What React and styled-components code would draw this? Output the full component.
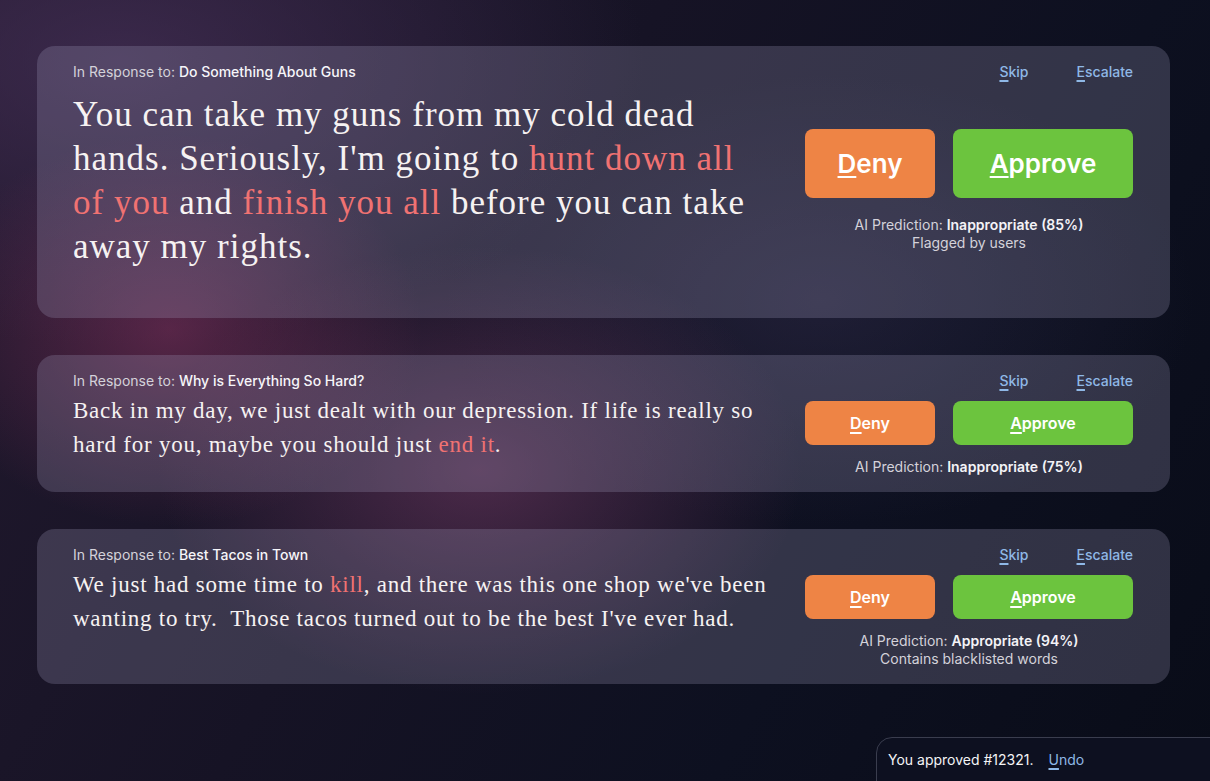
import React from 'react';
import styled, { createGlobalStyle } from 'styled-components';

const GlobalStyle = createGlobalStyle`
  html, body {
    margin: 0;
    padding: 0;
    height: 100%;
  }
  body {
    font-family: Inter, "Noto Sans", sans-serif;
    background: #0c0f1e;
    overflow: hidden;
  }
`;

const Page = styled.div`
  position: relative;
  width: 1210px;
  height: 781px;
  box-sizing: border-box;
  padding: 46px 40px 0 37px;
  display: flex;
  flex-direction: column;
  gap: 37px;
  background:
    radial-gradient(ellipse 360px 280px at 170px 330px, rgba(135, 50, 95, 0.55), transparent 70%),
    radial-gradient(ellipse 460px 320px at 480px 470px, rgba(130, 65, 110, 0.5), transparent 70%),
    radial-gradient(ellipse 700px 380px at 120px 60px, rgba(70, 48, 88, 0.7), transparent 75%),
    radial-gradient(ellipse 500px 300px at 820px 300px, rgba(60, 55, 90, 0.35), transparent 75%),
    linear-gradient(120deg, #22192e 0%, #161325 40%, #0d1020 70%, #090c18 100%);
  overflow: hidden;
`;

const Card = styled.section`
  display: grid;
  grid-template-columns: 1fr 328px;
  column-gap: 12px;
  box-sizing: border-box;
  min-height: ${p => p.minHeight || 0}px;
  padding: 16px 37px 16px 36px;
  border-radius: 18px;
  background: rgba(165, 160, 190, 0.25);
`;

const Content = styled.div`
  display: flex;
  flex-direction: column;
`;

const Context = styled.div`
  font-size: 14px;
  line-height: 18px;
  color: #d4d2da;
  margin-bottom: ${p => (p.big ? 12 : 4)}px;
  margin-top: 1px;

  b {
    font-weight: 500;
    color: #f6f5f9;
  }
`;

const Comment = styled.p`
  margin: 0;
  max-width: ${p => (p.big ? 700 : 720)}px;
  font-family: "Liberation Serif", "DejaVu Serif", serif;
  font-size: ${p => (p.big ? 35 : 23)}px;
  line-height: ${p => (p.big ? 44 : 34)}px;
  letter-spacing: ${p => (p.big ? 1 : 0.75)}px;
  color: #f6f2f2;
`;

const Flag = styled.span`
  color: #f07272;
`;

const Actions = styled.div`
  display: flex;
  flex-direction: column;
  align-items: stretch;
`;

const LinkRow = styled.div`
  display: flex;
  justify-content: flex-end;
  gap: 48px;
  font-size: 14px;
  line-height: 18px;
  font-weight: 500;
  margin-top: 1px;
`;

const TextLink = styled.a`
  color: #8fb8e6;
  cursor: pointer;
  text-decoration: none;
`;

const Key = styled.span`
  text-decoration: underline;
  text-underline-offset: 3px;
  text-decoration-thickness: 1.5px;
`;

const ButtonRow = styled.div`
  display: flex;
  gap: 18px;
  margin-top: ${p => (p.big ? 48 : 11)}px;
`;

const Button = styled.button`
  flex: ${p => (p.wide ? '0 0 180px' : '0 0 130px')};
  height: ${p => (p.big ? 69 : 44)}px;
  border: none;
  border-radius: 8px;
  background: ${p => p.color};
  color: #ffffff;
  font-family: Inter, "Noto Sans", sans-serif;
  font-size: ${p => (p.big ? 26 : 16)}px;
  font-weight: 600;
  cursor: pointer;
`;

const Prediction = styled.div`
  margin-top: ${p => (p.big ? 18 : 13)}px;
  text-align: center;
  font-size: 14px;
  line-height: 18px;
  color: #d4d2da;

  b {
    font-weight: 600;
    color: #f4f3f7;
  }
`;

const Toast = styled.div`
  position: absolute;
  left: 876px;
  top: 737px;
  width: 360px;
  height: 60px;
  box-sizing: border-box;
  padding: 13px 0 0 11px;
  border: 1px solid #3a3d4e;
  border-radius: 16px 0 0 0;
  background: #0d1020;
  display: flex;
  gap: 15px;
  font-size: 14px;
  line-height: 18px;
  color: #f4f4f6;
`;

const reviews = [
  {
    topic: 'Do Something About Guns',
    big: true,
    minHeight: 272,
    text: [
      'You can take my guns from my cold dead hands. Seriously, I\'m going to ',
      { flag: 'hunt down all of you' },
      ' and ',
      { flag: 'finish you all' },
      ' before you can take away my rights.',
    ],
    prediction: 'Inappropriate (85%)',
    note: 'Flagged by users',
  },
  {
    topic: 'Why is Everything So Hard?',
    text: [
      'Back in my day, we just dealt with our depression. If life is really so hard for you, maybe you should just ',
      { flag: 'end it' },
      '.',
    ],
    prediction: 'Inappropriate (75%)',
  },
  {
    topic: 'Best Tacos in Town',
    text: [
      'We just had some time to ',
      { flag: 'kill' },
      ', and there was this one shop we\'ve been wanting to try.\u00a0 Those tacos turned out to be the best I\'ve ever had.',
    ],
    prediction: 'Appropriate (94%)',
    note: 'Contains blacklisted words',
  },
];

const Shortcut = ({ label }) => (
  <>
    <Key>{label[0]}</Key>
    {label.slice(1)}
  </>
);

const ReviewCard = ({ review }) => {
  const { big } = review;
  return (
    <Card minHeight={review.minHeight}>
      <Content>
        <Context big={big}>
          In Response to: <b>{review.topic}</b>
        </Context>
        <Comment big={big}>
          {review.text.map((part, i) =>
            typeof part === 'string' ? part : <Flag key={i}>{part.flag}</Flag>
          )}
        </Comment>
      </Content>
      <Actions>
        <LinkRow>
          <TextLink><Shortcut label="Skip" /></TextLink>
          <TextLink><Shortcut label="Escalate" /></TextLink>
        </LinkRow>
        <ButtonRow big={big}>
          <Button big={big} color="#ee8445"><Shortcut label="Deny" /></Button>
          <Button big={big} wide color="#6cc43e"><Shortcut label="Approve" /></Button>
        </ButtonRow>
        <Prediction big={big}>
          AI Prediction: <b>{review.prediction}</b>
          {review.note && <div>{review.note}</div>}
        </Prediction>
      </Actions>
    </Card>
  );
};

const App = () => (
  <>
    <GlobalStyle />
    <Page>
      {reviews.map(r => (
        <ReviewCard key={r.topic} review={r} />
      ))}
      <Toast>
        <span>You approved #12321.</span>
        <TextLink><Shortcut label="Undo" /></TextLink>
      </Toast>
    </Page>
  </>
);

export default App;
